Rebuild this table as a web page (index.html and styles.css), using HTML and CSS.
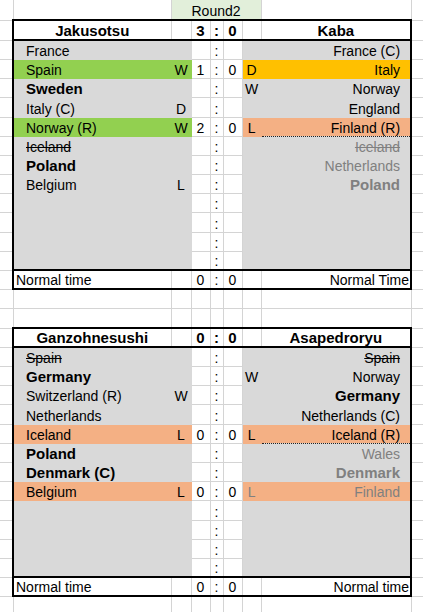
FILE: index.html
```html
<!DOCTYPE html>
<html lang="en">
<head>
<meta charset="utf-8">
<title>Round2</title>
<link rel="stylesheet" href="styles.css">
</head>
<body>
<table class="sheet">
<colgroup>
<col class="cA"><col class="cB"><col class="cC"><col class="cD"><col class="cE"><col class="cF"><col class="cG"><col class="cH"><col class="cI">
</colgroup>
<tbody>
<tr class="h20"><td class="first"></td><td class="first"></td><td colspan="5" class="round first">Round2</td><td class="first"></td><td class="first"></td></tr>
<tr class="h20"><td></td><td class="hd hl">Jakusotsu</td><td class="hd"></td><td class="hd c">3</td><td class="hd c">:</td><td class="hd c">0</td><td class="hd"></td><td class="hd hr">Kaba</td><td></td></tr>
<tr><td></td><td class="g n">France</td><td class="g c"></td><td class="c"></td><td class="c">:</td><td class="c"></td><td class="g c"></td><td class="g rn">France (C)</td><td></td></tr>
<tr><td></td><td class="gr n">Spain</td><td class="gr c">W</td><td class="c">1</td><td class="c">:</td><td class="c">0</td><td class="au c">D</td><td class="au rn">Italy</td><td></td></tr>
<tr><td></td><td class="g n b">Sweden</td><td class="g c"></td><td class="c"></td><td class="c">:</td><td class="c"></td><td class="g c">W</td><td class="g rn">Norway</td><td></td></tr>
<tr class="h20"><td></td><td class="g n">Italy (C)</td><td class="g c">D</td><td class="c"></td><td class="c">:</td><td class="c"></td><td class="g c"></td><td class="g rn">England</td><td></td></tr>
<tr><td></td><td class="gr n">Norway (R)</td><td class="gr c">W</td><td class="c">2</td><td class="c">:</td><td class="c">0</td><td class="sa c">L</td><td class="sa rn dotb">Finland (R)</td><td></td></tr>
<tr><td></td><td class="g n s">Iceland</td><td class="g c"></td><td class="c"></td><td class="c">:</td><td class="c"></td><td class="g c"></td><td class="g rn dott m s">Iceland</td><td></td></tr>
<tr><td></td><td class="g n b">Poland</td><td class="g c"></td><td class="c"></td><td class="c">:</td><td class="c"></td><td class="g c"></td><td class="g rn m">Netherlands</td><td></td></tr>
<tr><td></td><td class="g n">Belgium</td><td class="g c">L</td><td class="c"></td><td class="c">:</td><td class="c"></td><td class="g c"></td><td class="g rn m b">Poland</td><td></td></tr>
<tr><td></td><td class="g n"></td><td class="g c"></td><td class="c"></td><td class="c">:</td><td class="c"></td><td class="g c"></td><td class="g rn"></td><td></td></tr>
<tr class="h20"><td></td><td class="g n"></td><td class="g c"></td><td class="c"></td><td class="c">:</td><td class="c"></td><td class="g c"></td><td class="g rn"></td><td></td></tr>
<tr><td></td><td class="g n"></td><td class="g c"></td><td class="c"></td><td class="c">:</td><td class="c"></td><td class="g c"></td><td class="g rn"></td><td></td></tr>
<tr><td></td><td class="g n"></td><td class="g c"></td><td class="c"></td><td class="c">:</td><td class="c"></td><td class="g c"></td><td class="g rn"></td><td></td></tr>
<tr><td></td><td class="nt n ntl">Normal time</td><td class="nt"></td><td class="nt c">0</td><td class="nt c">:</td><td class="nt c">0</td><td class="nt"></td><td class="nt rn ntr">Normal Time</td><td></td></tr>
<tr><td></td><td></td><td></td><td></td><td></td><td></td><td></td><td></td><td></td></tr>
<tr class="h20"><td></td><td></td><td></td><td></td><td></td><td></td><td></td><td></td><td></td></tr>
<tr><td></td><td class="hd hl">Ganzohnesushi</td><td class="hd"></td><td class="hd c">0</td><td class="hd c">:</td><td class="hd c">0</td><td class="hd"></td><td class="hd hr">Asapedroryu</td><td></td></tr>
<tr><td></td><td class="g n s">Spain</td><td class="g c"></td><td class="c"></td><td class="c">:</td><td class="c"></td><td class="g c"></td><td class="g rn s">Spain</td><td></td></tr>
<tr><td></td><td class="g n b">Germany</td><td class="g c"></td><td class="c"></td><td class="c">:</td><td class="c"></td><td class="g c">W</td><td class="g rn">Norway</td><td></td></tr>
<tr><td></td><td class="g n">Switzerland (R)</td><td class="g c">W</td><td class="c"></td><td class="c">:</td><td class="c"></td><td class="g c"></td><td class="g rn b">Germany</td><td></td></tr>
<tr class="h20"><td></td><td class="g n">Netherlands</td><td class="g c"></td><td class="c"></td><td class="c">:</td><td class="c"></td><td class="g c"></td><td class="g rn">Netherlands (C)</td><td></td></tr>
<tr><td></td><td class="sa n">Iceland</td><td class="sa c">L</td><td class="c">0</td><td class="c">:</td><td class="c">0</td><td class="sa c">L</td><td class="sa rn dotb">Iceland (R)</td><td></td></tr>
<tr><td></td><td class="g n b">Poland</td><td class="g c"></td><td class="c"></td><td class="c">:</td><td class="c"></td><td class="g c"></td><td class="g rn dott m">Wales</td><td></td></tr>
<tr><td></td><td class="g n b">Denmark (C)</td><td class="g c"></td><td class="c"></td><td class="c">:</td><td class="c"></td><td class="g c"></td><td class="g rn m b">Denmark</td><td></td></tr>
<tr><td></td><td class="sa n">Belgium</td><td class="sa c">L</td><td class="c">0</td><td class="c">:</td><td class="c">0</td><td class="sa c m">L</td><td class="sa rn m">Finland</td><td></td></tr>
<tr class="h20"><td></td><td class="g n"></td><td class="g c"></td><td class="c"></td><td class="c">:</td><td class="c"></td><td class="g c"></td><td class="g rn"></td><td></td></tr>
<tr><td></td><td class="g n"></td><td class="g c"></td><td class="c"></td><td class="c">:</td><td class="c"></td><td class="g c"></td><td class="g rn"></td><td></td></tr>
<tr><td></td><td class="g n"></td><td class="g c"></td><td class="c"></td><td class="c">:</td><td class="c"></td><td class="g c"></td><td class="g rn"></td><td></td></tr>
<tr><td></td><td class="g n"></td><td class="g c"></td><td class="c"></td><td class="c">:</td><td class="c"></td><td class="g c"></td><td class="g rn"></td><td></td></tr>
<tr><td></td><td class="nt n ntl">Normal time</td><td class="nt"></td><td class="nt c">0</td><td class="nt c">:</td><td class="nt c">0</td><td class="nt"></td><td class="nt rn ntr">Normal time</td><td></td></tr>
<tr><td></td><td></td><td></td><td></td><td></td><td></td><td></td><td></td><td></td></tr>
</tbody>
</table>
</body>
</html>
```
FILE: styles.css
```css
html, body {
  margin: 0;
  padding: 0;
  background: #ffffff;
}

body {
  font-family: "Liberation Sans", Arial, sans-serif;
  font-size: 14px;
  color: #000000;
  overflow: hidden;
}

.sheet {
  table-layout: fixed;
  border-collapse: collapse;
  width: 423px;
}

.cA { width: 13px; }
.cB { width: 158px; }
.cC { width: 20px; }
.cD { width: 19px; }
.cE { width: 13px; }
.cF { width: 19px; }
.cG { width: 19px; }
.cH { width: 150px; }
.cI { width: 12px; }

.sheet tr { height: 19px; }
.sheet tr.h20 { height: 20px; }

.sheet td {
  border: 1px solid #d4d4d4;
  padding: 0 0 1px 0;
  line-height: 1;
  vertical-align: bottom;
  white-space: nowrap;
  overflow: visible;
}

.sheet td:first-child { border-left: none; }
.sheet td:last-child { border-right: none; }
.sheet td.first { border-top: none; }

/* fills */
.g { background: #d9d9d9; border-color: #d9d9d9 !important; }
.gr { background: #92d050; border-color: #92d050 !important; }
.au { background: #ffc000; border-color: #ffc000 !important; }
.sa { background: #f4b084; border-color: #f4b084 !important; }
.round {
  background: #e2efda;
  text-align: center;
  border-color: #e2efda;
}

/* alignment */
.c { text-align: center; }
.n { text-align: left; padding-left: 12px !important; }
.rn { text-align: right; padding-right: 10px !important; }
.ntl { padding-left: 2px !important; }
.ntr { padding-right: 1px !important; }

/* text styles */
.b { font-weight: bold; font-size: 15px; }
.s { text-decoration: line-through; }
.m { color: #808080; }

/* thick borders */
.sheet td.n { border-left: 2px solid #000 !important; }
.sheet td.rn { border-right: 2px solid #000 !important; }

.sheet td.hd {
  border-top: 2px solid #000;
  border-bottom: 2px solid #000;
  font-weight: bold;
  font-size: 15px;
}
.sheet td.hl { border-left: 2px solid #000; text-align: center; }
.sheet td.hr { border-right: 2px solid #000; text-align: center; }

.sheet td.nt {
  border-top: 2px solid #000;
  border-bottom: 2px solid #000;
}

/* dotted separators */
.sheet td.dotb { border-bottom: 1px dotted #222 !important; }
.sheet td.dott { border-top: 1px dotted #222 !important; }
```
